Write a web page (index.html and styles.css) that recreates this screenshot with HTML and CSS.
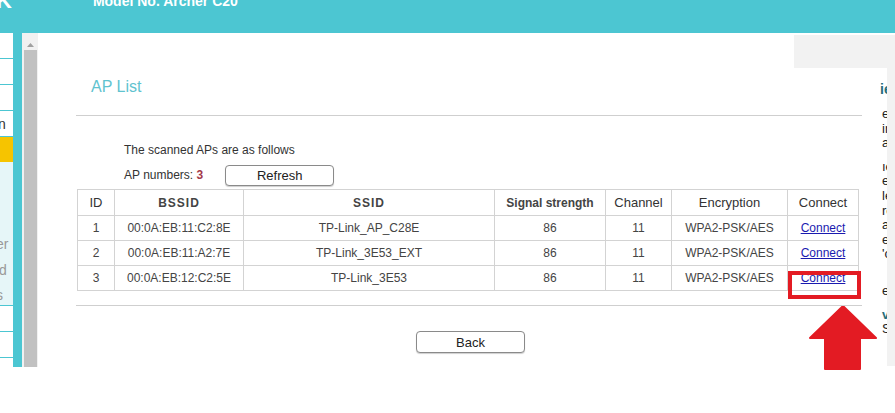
FILE: index.html
```html
<!DOCTYPE html>
<html>
<head>
<meta charset="utf-8">
<link rel="stylesheet" href="styles.css">
</head>
<body>
<header class="top">
  <span class="logo">K</span>
  <span class="model">Model No. Archer C20</span>
</header>
<div class="frame">
  <nav class="nav">
    <div class="nav-item"></div>
    <div class="nav-item"></div>
    <div class="nav-item"></div>
    <div class="nav-item txt">n</div>
    <div class="nav-item active"></div>
    <div class="nav-sub">
      <div class="sub">er</div>
      <div class="sub">d</div>
      <div class="sub">s</div>
    </div>
    <div class="nav-item"></div>
    <div class="nav-item"></div>
  </nav>
  <div class="navbar"></div>
  <div class="scroll"><div class="scroll-up"><svg width="7" height="4" viewBox="0 0 7 4"><path d="M0 4 L3.5 0 L7 4Z" fill="#a0a0a0"/></svg></div><div class="thumb"></div></div>
  <main class="content">
    <div class="panel">
      <h1 class="title">AP List</h1>
      <div class="body">
        <p class="line1">The scanned APs are as follows</p>
        <div class="line2"><span>AP numbers: <b class="num">3</b></span><button class="btn refresh">Refresh</button></div>
        <table class="aps">
          <colgroup>
            <col style="width:37px"><col style="width:129px"><col style="width:251px"><col style="width:111px"><col style="width:66px"><col style="width:116px"><col style="width:71px">
          </colgroup>
          <tr><th>ID</th><th class="b sp">BSSID</th><th class="b sp">SSID</th><th class="b">Signal strength</th><th>Channel</th><th>Encryption</th><th>Connect</th></tr>
          <tr><td>1</td><td>00:0A:EB:11:C2:8E</td><td>TP-Link_AP_C28E</td><td>86</td><td>11</td><td>WPA2-PSK/AES</td><td><a href="#">Connect</a></td></tr>
          <tr><td>2</td><td>00:0A:EB:11:A2:7E</td><td>TP-Link_3E53_EXT</td><td>86</td><td>11</td><td>WPA2-PSK/AES</td><td><a href="#">Connect</a></td></tr>
          <tr><td>3</td><td>00:0A:EB:12:C2:5E</td><td>TP-Link_3E53</td><td>86</td><td>11</td><td>WPA2-PSK/AES</td><td><a href="#">Connect</a></td></tr>
        </table>
      </div>
      <div class="foot"><button class="btn back">Back</button></div>
    </div>
    <aside class="help">
      <div class="help-inner">
        <div class="h-head">ie</div>
        <div class="hl">e</div><div class="hl">ir</div><div class="hl">a</div>
        <div class="hl gap">ıe</div><div class="hl">e.</div><div class="hl">le</div><div class="hl">rc</div><div class="hl">a</div><div class="hl">e</div><div class="hl">'c</div>
        <div class="hl gap2">e</div>
        <div class="hl gap h-b">v</div><div class="hl">S</div>
      </div>
    </aside>
    <div class="mark"></div>
    <svg class="arrow" width="68" height="64" viewBox="0 0 68 64"><path d="M34 0 L67 32 L51 32 L51 63 L16 63 L16 32 L1 32 Z" fill="#e31b23" stroke="#e31b23" stroke-linejoin="round" stroke-width="2"/></svg>
  </main>
</div>
</body>
</html>
```
FILE: styles.css
```css
* { box-sizing: border-box; }
html, body { margin: 0; padding: 0; }
body {
  width: 895px; height: 413px; overflow: hidden;
  font-family: "Liberation Sans", Arial, sans-serif;
  background: #fff; color: #333;
}
.top {
  height: 33px; background: #4cc6d2; color: #fff;
  display: flex; align-items: flex-start; overflow: hidden;
}
.logo { font-weight: bold; font-size: 22px; line-height: 1; margin-top: -10px; margin-left: -4px; }
.model { font-weight: bold; font-size: 14px; line-height: 1; margin-top: -6px; margin-left: 81px; }
.frame { display: flex; height: 380px; }
.nav { width: 13px; height: 334px; display: flex; flex-direction: column; padding-top: 0; overflow: hidden; }
.nav-item { height: 26px; border-bottom: 1.5px solid #4cc6d2; flex: none; font-size: 14px; color: #333; line-height: 26px; }
.nav-item.txt { margin-left: -2px; }
.nav-item.active { height: 25px; background: #f6c400; border-bottom: none; }
.nav-sub { height: 144px; background: #e6f6f8; border-bottom: 1.5px solid #4cc6d2; padding-top: 70px; flex: none; }
.sub { font-size: 14px; color: #999; line-height: 25.5px; height: 25.5px; margin-left: -4px; white-space: nowrap; }
.nav-sub .sub:nth-child(2) { margin-left: -1px; }
.navbar { width: 9px; height: 334px; background: #4cc6d2; flex: none; }
.scroll { width: 16px; height: 334px; background: #f1f1f1; flex: none; padding: 6px 1px 0 2px; }
.scroll-up { height: 11px; display: flex; justify-content: center; align-items: center; }
.thumb { height: 317px; background: #c1c1c1; }
.content { flex: 1; position: relative; }
.panel { position: relative; z-index: 1; margin-left: 38px; width: 786px; padding-top: 0; }
.title { margin: 0; height: 83px; padding: 44px 0 0 15px; font-weight: normal; font-size: 16px; color: #5fc3cf; line-height: 20px; border-bottom: 1px solid #cfcfcf; }
.body { padding: 0 0 14px 1px; border-bottom: 1px solid #cfcfcf; }
.line1 { margin: 0; padding: 27px 0 0 47px; font-size: 12px; line-height: 14px; color: #333; }
.line2 { display: flex; align-items: center; padding-left: 47px; margin-top: 8px; font-size: 12px; height: 20px; }
.num { font-weight: bold; color: #a33a4a; }
.btn { font-family: "Liberation Sans", Arial, sans-serif; font-size: 13px; color: #222; background: #fff; border: 1px solid #8a8a8a; border-radius: 4px; padding: 0; height: 21px; width: 109px; box-shadow: 0 1px 1px #cfcfcf; }
.refresh { margin-left: 22px; }
.aps { border-collapse: collapse; table-layout: fixed; width: 781px; margin-top: 4px; font-size: 12px; background: #fff; }
.aps th, .aps td { border: 1px solid #d3d3d3; text-align: center; height: 25px; padding: 0; color: #444; }
.aps th { height: 26px; font-weight: normal; font-size: 13px; color: #333; }
.aps th.b { font-weight: bold; font-size: 12px; color: #444; }
.aps th.sp { letter-spacing: 1px; }
.aps a { color: #1a1ab0; text-decoration: underline; }
.foot { padding-top: 25px; padding-left: 340px; }
.back { height: 22px; }
.help { position: absolute; left: 756px; top: 2px; width: 101px; height: 331px; background: #f2f2f2; padding: 33px 8px 0 0; }
.help-inner { background: #fff; height: 298px; padding: 13px 0 0 88px; font-size: 13px; color: #222; white-space: nowrap; overflow: hidden; }
.h-head { font-weight: bold; color: #256d7a; font-size: 14px; line-height: 16px; margin-left: -2px; }
.hl { line-height: 14.6px; }
.h-head + .hl { margin-top: 10px; }
.gap { margin-top: 9px; }
.gap2 { margin-top: 22px; }
.h-b { font-weight: bold; color: #256d7a; }
.mark { position: absolute; z-index: 2; left: 750px; top: 238px; width: 73px; height: 28px; border: 4px solid #e31b23; }
.arrow { position: absolute; z-index: 2; left: 771px; top: 273px; }
```
